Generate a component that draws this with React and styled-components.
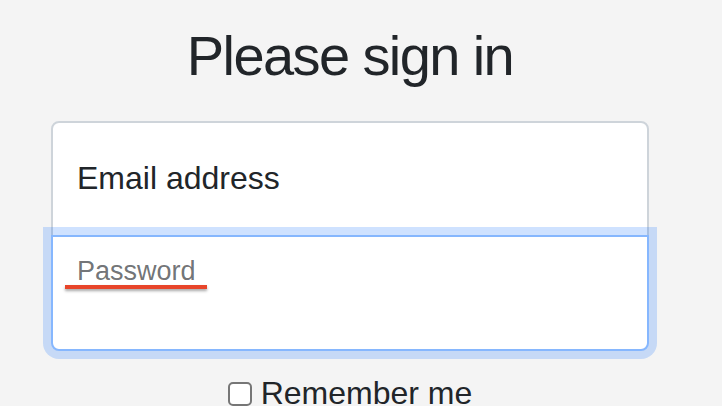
import React from 'react'
import styled, { createGlobalStyle } from 'styled-components'

const GlobalStyle = createGlobalStyle`
  html, body {
    margin: 0;
    padding: 0;
    background: #f4f4f4;
    color: #212529;
    font-family: "Liberation Sans", Arial, sans-serif;
  }
`

const Page = styled.main`
  width: 700px;
  padding-top: 22px;
  display: flex;
  flex-direction: column;
  align-items: center;
`

const Heading = styled.h1`
  margin: 0 0 32px;
  font-size: 56px;
  font-weight: 400;
  line-height: 1.2;
  letter-spacing: -1.6px;
`

const Form = styled.form`
  width: 598px;
  display: flex;
  flex-direction: column;
`

const Field = styled.div`
  position: relative;
  z-index: ${p => (p.focused ? 2 : 1)};
  margin-top: ${p => (p.first ? '0' : '-2px')};
  margin-bottom: ${p => (p.first ? '0' : '18px')};
`

const Input = styled.div`
  box-sizing: border-box;
  height: 116px;
  background: #fff;
  border: 2px solid ${p => (p.focused ? '#86b7fe' : '#ced4da')};
  border-radius: ${p => (p.first ? '8px 8px 0 0' : '0 0 8px 8px')};
  box-shadow: ${p => (p.focused ? '0 0 0 8px rgba(13, 110, 253, 0.2)' : 'none')};
`

const Label = styled.label`
  position: absolute;
  left: 26px;
  top: ${p => (p.floated ? '16px' : '33px')};
  font-size: ${p => (p.floated ? '27px' : '32px')};
  line-height: 1.5;
  color: ${p => (p.floated ? 'rgba(33, 37, 41, 0.65)' : '#212529')};
  white-space: nowrap;
`

const Squiggle = styled.span`
  position: absolute;
  left: 14px;
  top: 50px;
  width: 142px;
  height: 4px;
  background: #e8452a;
  box-shadow: 0 2px 3px rgba(0, 0, 0, 0.35);
`

const CheckRow = styled.label`
  display: flex;
  align-items: center;
  justify-content: center;
  gap: 9px;
  font-size: 32px;
  line-height: 48px;
`

const Box = styled.span`
  box-sizing: border-box;
  width: 24px;
  height: 24px;
  border: 2px solid #767676;
  border-radius: 5px;
  background: #fff;
  margin-top: 2px;
`

export default function App() {
  return (
    <>
      <GlobalStyle />
      <Page>
        <Heading>Please sign in</Heading>
        <Form>
          <Field first>
            <Input first />
            <Label>Email address</Label>
          </Field>
          <Field focused>
            <Input focused />
            <Label floated>
              Password
            </Label>
            <Squiggle />
          </Field>
          <CheckRow>
            <Box />
            Remember me
          </CheckRow>
        </Form>
      </Page>
    </>
  )
}
